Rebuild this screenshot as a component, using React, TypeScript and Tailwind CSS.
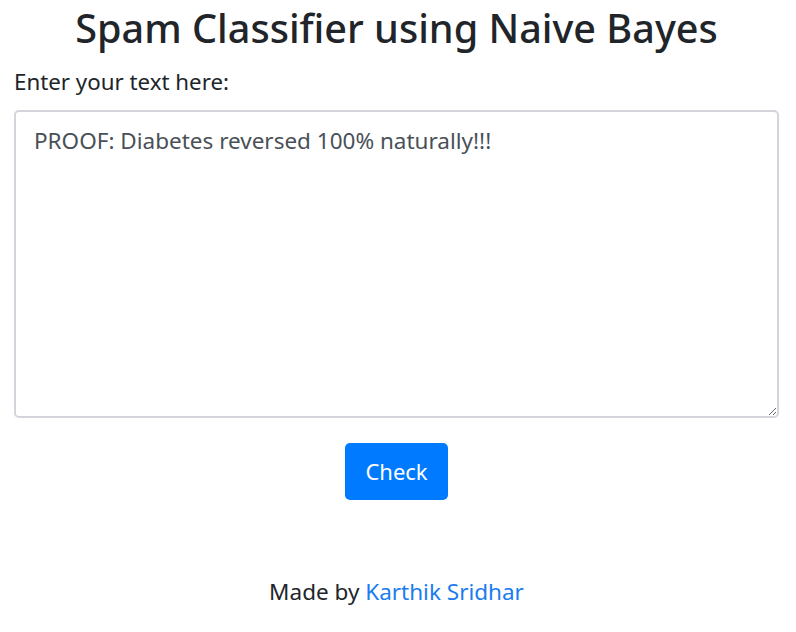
import { useState } from 'react';

export default function App() {
    const [text, setText] = useState('PROOF: Diabetes reversed 100% naturally!!!');

    return (
        <div className="min-h-screen bg-white pl-[14px] pr-[17px] text-[#212529] font-['Noto_Sans',sans-serif]">
            <h1 className="pt-[4px] text-center text-[39.6px] font-medium leading-[48px]">
                Spam Classifier using Naive Bayes
            </h1>
            <form onSubmit={(e) => e.preventDefault()} className="mt-[15px]">
                <label htmlFor="text" className="block text-[22.3px] leading-[30px]">
                    Enter your text here:
                </label>
                <textarea
                    id="text"
                    value={text}
                    onChange={(e) => setText(e.target.value)}
                    className="mt-[13px] block h-[308px] w-full rounded-[5px] border-2 border-[#d4d4dc] px-[18px] py-[14px] text-[22.5px] leading-[30px] text-[#495057] focus:outline-none"
                />
                <div className="mt-[25px] flex justify-center">
                    <button className="h-[57px] w-[103px] rounded-[5px] bg-[#007bff] text-[22px] text-white">
                        Check
                    </button>
                </div>
            </form>
            <p className="mt-[77px] text-center text-[22.5px] leading-[30px]">
                Made by <a href="#" className="text-[#1a7cf0]">Karthik Sridhar</a>
            </p>
        </div>
    );
}
